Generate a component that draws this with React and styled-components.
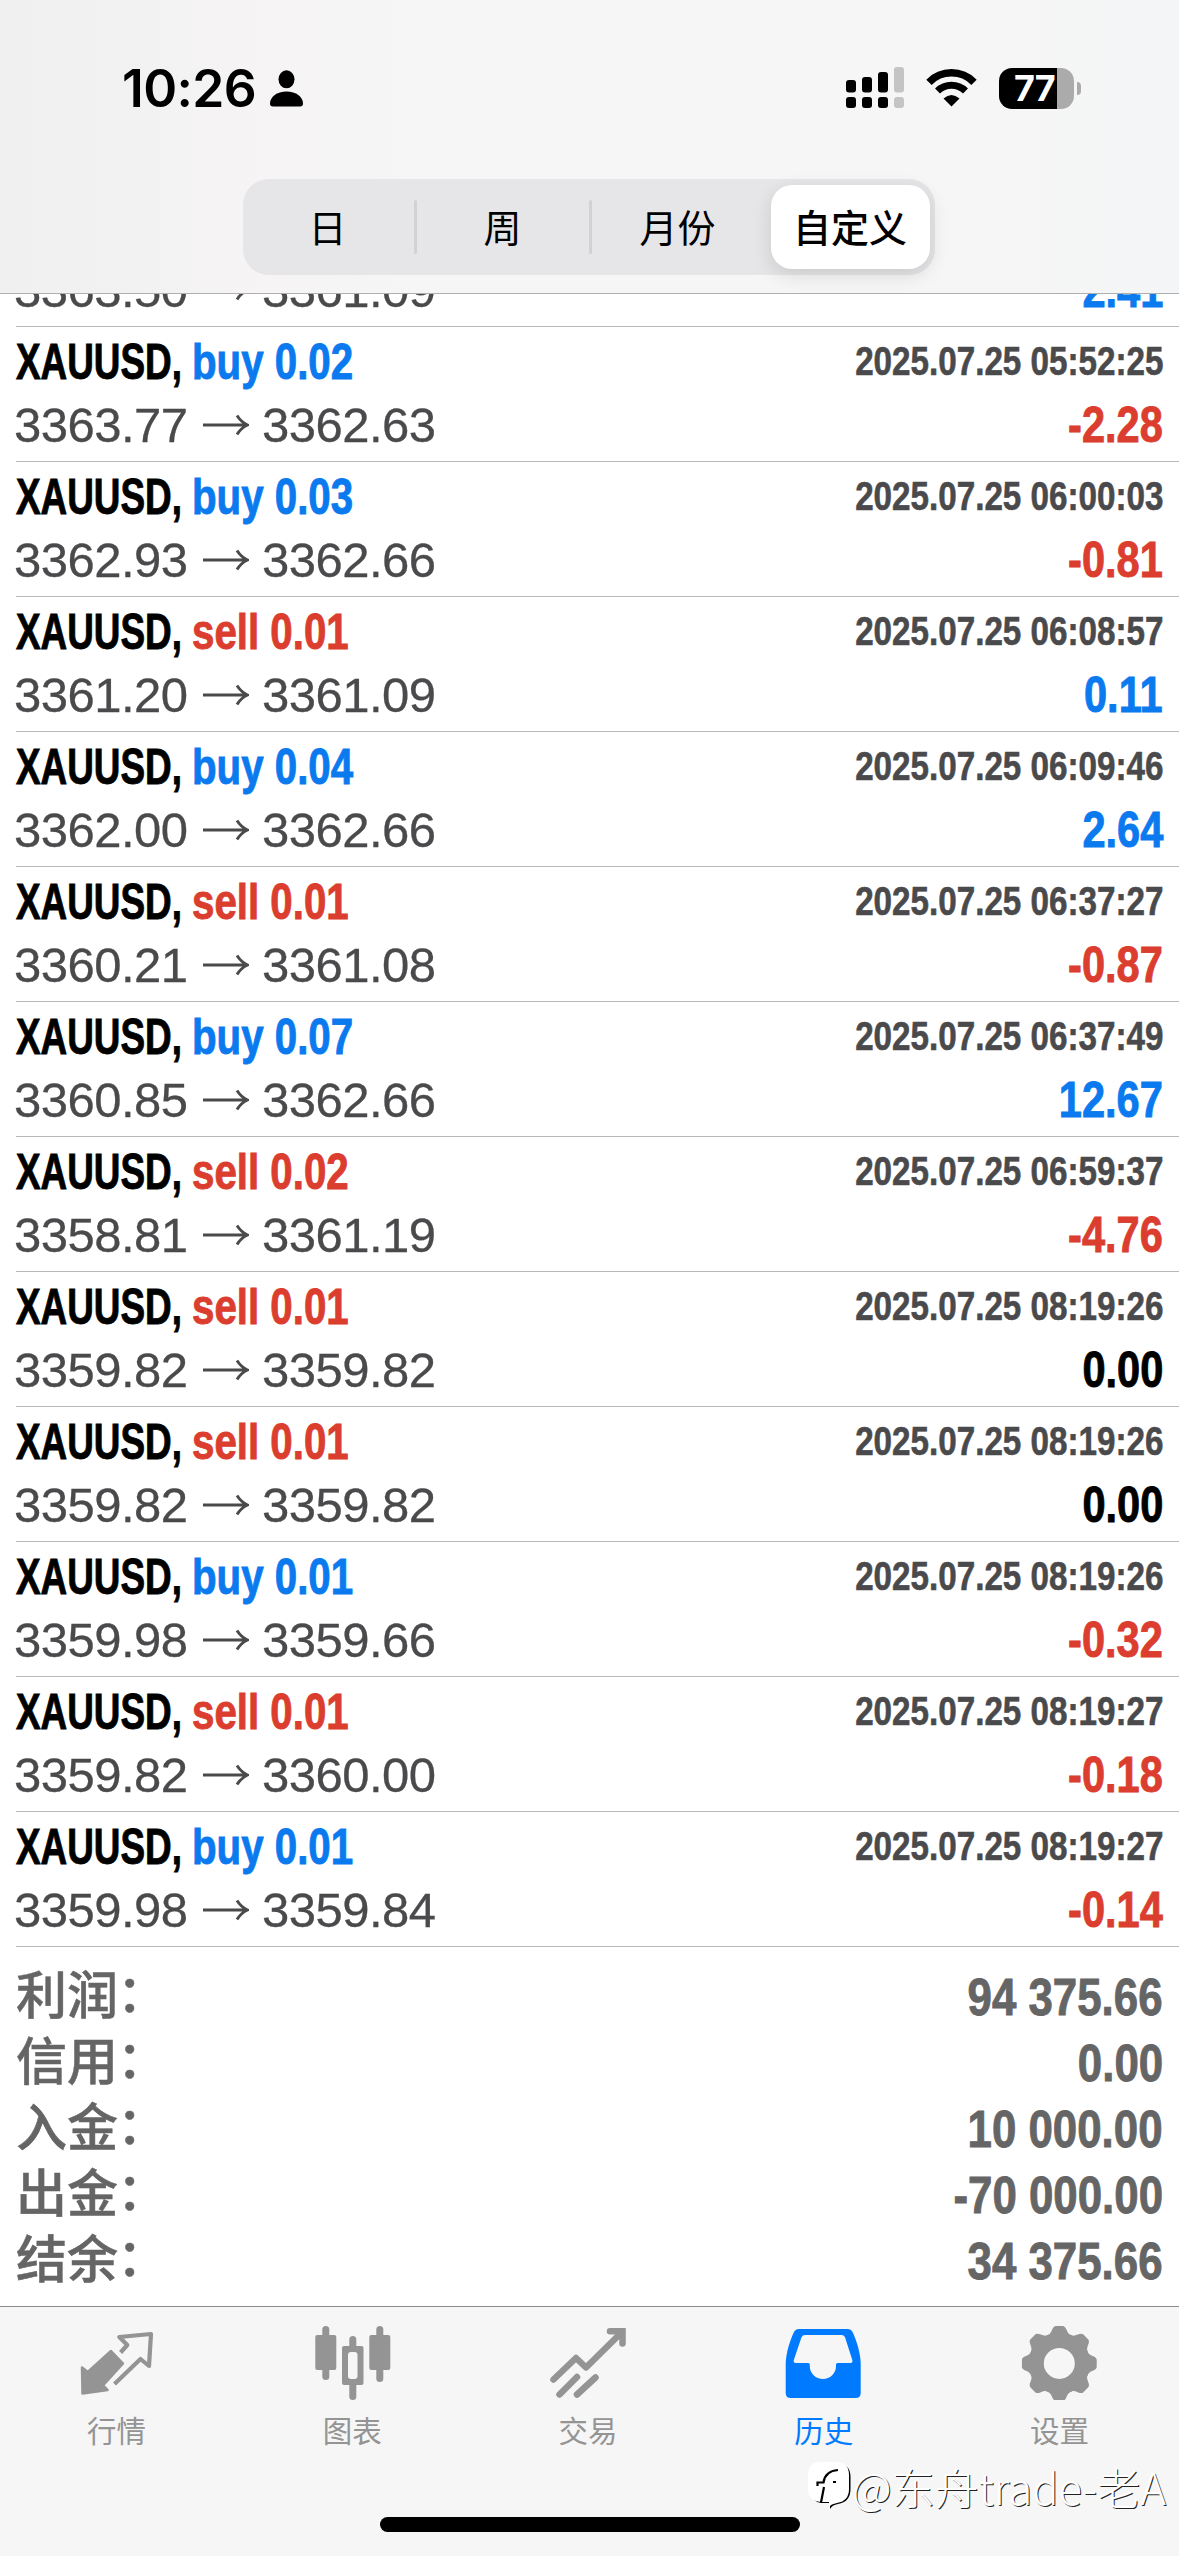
import React, { useState } from "react";
import styled, { createGlobalStyle } from "styled-components";

const trades = [
  { side: "buy", lot: "0.02", time: "2025.07.25 05:52:25", open: "3363.77", close: "3362.63", profit: "-2.28" },
  { side: "buy", lot: "0.03", time: "2025.07.25 06:00:03", open: "3362.93", close: "3362.66", profit: "-0.81" },
  { side: "sell", lot: "0.01", time: "2025.07.25 06:08:57", open: "3361.20", close: "3361.09", profit: "0.11" },
  { side: "buy", lot: "0.04", time: "2025.07.25 06:09:46", open: "3362.00", close: "3362.66", profit: "2.64" },
  { side: "sell", lot: "0.01", time: "2025.07.25 06:37:27", open: "3360.21", close: "3361.08", profit: "-0.87" },
  { side: "buy", lot: "0.07", time: "2025.07.25 06:37:49", open: "3360.85", close: "3362.66", profit: "12.67" },
  { side: "sell", lot: "0.02", time: "2025.07.25 06:59:37", open: "3358.81", close: "3361.19", profit: "-4.76" },
  { side: "sell", lot: "0.01", time: "2025.07.25 08:19:26", open: "3359.82", close: "3359.82", profit: "0.00" },
  { side: "sell", lot: "0.01", time: "2025.07.25 08:19:26", open: "3359.82", close: "3359.82", profit: "0.00" },
  { side: "buy", lot: "0.01", time: "2025.07.25 08:19:26", open: "3359.98", close: "3359.66", profit: "-0.32" },
  { side: "sell", lot: "0.01", time: "2025.07.25 08:19:27", open: "3359.82", close: "3360.00", profit: "-0.18" },
  { side: "buy", lot: "0.01", time: "2025.07.25 08:19:27", open: "3359.98", close: "3359.84", profit: "-0.14" },
];

const totals = [
  ["利润", "94 375.66"],
  ["信用", "0.00"],
  ["入金", "10 000.00"],
  ["出金", "-70 000.00"],
  ["结余", "34 375.66"],
];

const profitColor = (profit) => {
  const value = Number(profit);
  if (value === 0) return "#000";
  return value > 0 ? "#0a7aee" : "#db3d2e";
};

const QuotesIcon = () => (
  <Icon viewBox="0 0 90 90">
    <path
      d="M9 57.500L14.800 62L38 41L50 53.500L30 75.500L34.500 80L9.500 83.500Z"
      fill="currentColor"
      stroke="currentColor"
      strokeWidth="2.500"
      strokeLinejoin="round"
    />
    <path
      d="M47.600 42.500L54.300 35L46.300 27L78 24L76 56L67.500 49L41.500 74"
      fill="none"
      stroke="currentColor"
      strokeWidth="4.200"
      strokeLinejoin="round"
    />
  </Icon>
);

const ChartIcon = () => (
  <Icon viewBox="0 0 90 90" fill="currentColor">
    <rect x="13.300" y="16" width="7" height="54" rx="3.500" />
    <rect x="6.300" y="25" width="21" height="35" rx="2" />
    <rect x="67.300" y="16" width="7" height="56" rx="3.500" />
    <rect x="60.300" y="25" width="21" height="35" rx="2" />
    <rect x="40.300" y="26" width="7" height="64" rx="3.500" />
    <rect x="33" y="36" width="21.500" height="39" rx="2" />
    <rect x="39" y="42" width="9.500" height="27" rx="3" fill="#f6f6f6" />
  </Icon>
);

const TradeIcon = () => (
  <Icon
    viewBox="0 0 90 90"
    fill="none"
    stroke="currentColor"
    strokeWidth="6.500"
    strokeLinecap="round"
  >
    <path d="M9.500 69.500L32 48L42 57.500L78 22" strokeLinejoin="round" />
    <path d="M66 21.300H78.500V33.500" strokeLinejoin="miter" />
    <path d="M15.500 84.500L33 67M33 84.500L51.500 67.500" />
  </Icon>
);

const HistoryIcon = () => (
  <Icon viewBox="0 0 90 90">
    <path
      d="M5.700 54C5.700 44 10 30 14 22Q15.500 19 19 19H67.500Q71 19 72.500 22C76.500 30 80.700 44 80.700 54V83Q80.700 88 75.700 88H10.700Q5.700 88 5.700 83Z"
      fill="currentColor"
    />
    <path
      d="M25 25H61.500Q64 25 65 27.300L72.300 50Q73 53 70.500 53H57.500Q56 53 56 54.500V56A13.100 13.100 0 0 1 29.800 56V54.500Q29.800 53 28.300 53H16Q13 53 13.800 50L21.500 27.300Q22.500 25 25 25Z"
      fill="#f6f6f6"
    />
  </Icon>
);

const SettingsIcon = () => (
  <Icon viewBox="0 0 90 90" fill="currentColor">
    <circle cx="43.300" cy="53.400" r="23" fill="none" stroke="currentColor" strokeWidth="15" />
    {[0, 45, 90, 135, 180, 225, 270, 315].map((angle) => (
      <path
        key={angle}
        d="M30.500 25.500Q34 25 36 20Q37.500 16 40 16H46.600Q49 16 50.600 20Q52.600 25 56.100 25.500V32H30.500Z"
        transform={`rotate(${angle} 43.300 53.400)`}
      />
    ))}
  </Icon>
);

const tabs = [
  { name: "行情", icon: QuotesIcon },
  { name: "图表", icon: ChartIcon },
  { name: "交易", icon: TradeIcon },
  { name: "历史", icon: HistoryIcon },
  { name: "设置", icon: SettingsIcon },
];

function StatusBar() {
  return (
    <Status>
      <Clock>10:26</Clock>
      <svg width="33" height="37" viewBox="0 0 33 37">
        <ellipse cx="16.500" cy="9.300" rx="8" ry="9" />
        <path d="M3 36.500Q0 36.500 0 33.500C0 27 7 21.500 16.500 21.500S33 27 33 33.500Q33 36.500 30 36.500Z" />
      </svg>
      <StatusIcons>
        <svg width="58" height="42" viewBox="0 0 58 42">
          <rect x="0" y="13" width="10" height="12.500" rx="3" />
          <rect x="16" y="10" width="10" height="15.500" rx="3" />
          <rect x="32" y="5" width="10" height="20.500" rx="3" />
          <rect x="48" y="0" width="10" height="25.500" rx="3" fill="#c4c4c4" />
          <rect x="0" y="30" width="10" height="11" rx="3" />
          <rect x="16" y="30" width="10" height="11" rx="3" />
          <rect x="32" y="30" width="10" height="11" rx="3" />
          <rect x="48" y="30" width="10" height="11" rx="3" fill="#c4c4c4" />
        </svg>
        <svg width="51" height="38" viewBox="0 0 51 38">
          <path d="M3 13.300A31.500 31.500 0 0 1 48 13.300" fill="none" stroke="#000" strokeWidth="7.500" />
          <path d="M11.500 22A20 20 0 0 1 39.500 22" fill="none" stroke="#000" strokeWidth="7" />
          <path d="M25.500 37.500L17.500 29.500Q25.500 22.500 33.500 29.500Z" />
        </svg>
        <Battery>
          <BatteryBody>
            <span>77</span>
          </BatteryBody>
          <BatteryTip />
        </Battery>
      </StatusIcons>
    </Status>
  );
}

function Prices({ open, close, profit }) {
  return (
    <PriceLine>
      <Price>{open}</Price>
      <svg width="46" height="22" viewBox="0 0 46 22">
        <path
          d="M0 11H44M34 1.500Q38 8 44.500 11Q38 14 34 20.500"
          fill="none"
          stroke="#4a4a4c"
          strokeWidth="2.900"
        />
      </svg>
      <Price>{close}</Price>
      <Profit $color={profitColor(profit)}>{profit}</Profit>
    </PriceLine>
  );
}

function Trade({ trade }) {
  return (
    <Row>
      <Line>
        <Symbol>XAUUSD,</Symbol>
        <Side $side={trade.side}>
          {trade.side} {trade.lot}
        </Side>
        <Time>{trade.time}</Time>
      </Line>
      <Prices open={trade.open} close={trade.close} profit={trade.profit} />
    </Row>
  );
}

function App() {
  const [period, setPeriod] = useState("自定义");
  const [activeTab, setActiveTab] = useState("历史");

  return (
    <Page>
      <GlobalStyle />
      <Header>
        <StatusBar />
        <Segments>
          {["日", "周", "月份", "自定义"].map((name) => (
            <Segment key={name} $active={period === name} onClick={() => setPeriod(name)}>
              {name}
            </Segment>
          ))}
        </Segments>
      </Header>
      <List>
        <Trades>
          {/* scrolled halfway under the header */}
          <Row>
            <Prices open="3363.50" close="3361.09" profit="2.41" />
          </Row>
          {trades.map((trade, i) => (
            <Trade key={i} trade={trade} />
          ))}
        </Trades>
        <Summary>
          {totals.map(([label, value]) => (
            <SummaryRow key={label}>
              <SummaryLabel>
                {label}
                <Colon>：</Colon>
              </SummaryLabel>
              <SummaryValue>{value}</SummaryValue>
            </SummaryRow>
          ))}
        </Summary>
      </List>
      <TabBar>
        {tabs.map(({ name, icon: TabIcon }) => (
          <Tab key={name} $active={activeTab === name} onClick={() => setActiveTab(name)}>
            <TabIcon />
            <TabLabel>{name}</TabLabel>
          </Tab>
        ))}
      </TabBar>
      <HomeIndicator />
      <Watermark>
        <svg width="44" height="50" viewBox="0 0 44 50">
          <path
            d="M15 2H30Q42.500 2 42.500 15V27Q42.500 40 30 42Q24 43 22 47V41H13Q3 39 2 29Z"
            fill="#000"
          />
          <path
            d="M13 0H28Q41 0 41 13V27Q41 39 29 41Q23 42 21 45V40H13Q0 39 0 27V13Q0 0 13 0Z"
            fill="#fff"
          />
          <path
            d="M9.500 24V20.500H15.500Q17 9 30 8M16 25L13 40.500M25 20H28"
            fill="none"
            stroke="#000"
            strokeWidth="2.200"
          />
        </svg>
        <span>@东舟trade-老A</span>
      </Watermark>
    </Page>
  );
}

const GlobalStyle = createGlobalStyle`
  * {
    box-sizing: border-box;
  }
  body {
    margin: 0;
    background: #fff;
  }
`;

const Page = styled.div`
  position: relative;
  display: flex;
  flex-direction: column;
  width: 1179px;
  height: 2556px;
  overflow: hidden;
  background: #fff;
  color: #000;
  font-family: "Liberation Sans", "Noto Sans CJK SC", sans-serif;
`;

const Header = styled.header`
  flex: none;
  height: 294px;
  border-bottom: 1px solid #b0b0b0;
  background: linear-gradient(90deg, #f0f0f1 0, #f3f2f2 150px, #f6f4f4 260px, #f6f6f6 420px, #f6f6f6 980px, #f4f5f6 100%);
`;

const Status = styled.div`
  display: flex;
  align-items: center;
  height: 179px;
  padding: 0 98px 3px 122px;
`;

const Clock = styled.div`
  width: 148px;
  font-family: Inter, sans-serif;
  font-size: 51.500px;
  font-weight: 600;
  letter-spacing: -0.6px;
`;

const StatusIcons = styled.div`
  display: flex;
  align-items: center;
  gap: 22px;
  margin-left: auto;
`;

const Battery = styled.div`
  display: flex;
  align-items: center;
  gap: 3px;
`;

const BatteryBody = styled.div`
  width: 75px;
  height: 41px;
  padding-left: 15px;
  border-radius: 13px;
  background: linear-gradient(90deg, #000 58px, #ababab 58px);
  color: #fff;
  font-family: Inter, sans-serif;
  font-size: 36px;
  font-weight: 700;
  line-height: 41px;
  letter-spacing: -1px;
`;

const BatteryTip = styled.div`
  width: 4px;
  height: 13px;
  border-radius: 0 4px 4px 0;
  background: #ababab;
`;

const Segments = styled.div`
  display: flex;
  width: 692px;
  height: 96px;
  margin-left: 243px;
  padding: 6px 5px 6px 0;
  border-radius: 26px;
  background: #e6e5e7;
`;

const Segment = styled.button`
  position: relative;
  flex: none;
  width: ${(props) => (props.$active ? "159px" : "175px")};
  height: 84px;
  margin-left: ${(props) => (props.$active ? "auto" : "0")};
  padding: 0 ${(props) => (props.$active ? "1px" : "6px")} 2px 0;
  border: none;
  border-radius: 21px;
  background: ${(props) => (props.$active ? "#fff" : "transparent")};
  box-shadow: ${(props) => (props.$active ? "0 6px 20px rgba(0, 0, 0, 0.12)" : "none")};
  color: #000;
  font-family: "Noto Sans CJK SC", sans-serif;
  font-size: 38px;
  font-weight: ${(props) => (props.$active ? 500 : 400)};
  line-height: 78px;

  /* divider between idle segments */
  &:nth-child(-n + 2)::after {
    content: "";
    position: absolute;
    top: 15px;
    right: 1px;
    width: 3px;
    height: 54px;
    border-radius: 2px;
    background: #d2d1d3;
  }
`;

const List = styled.main`
  flex: none;
  height: 2012px;
  overflow: hidden;
`;

const Trades = styled.div`
  margin: -34px 0 0 16px;
`;

const Row = styled.div`
  padding-bottom: 7px;
  border-bottom: 1px solid #b8b8ba;
`;

const Line = styled.div`
  display: flex;
  height: 68px;
  padding-right: 16px;
  line-height: 70px;
  white-space: nowrap;
`;

/* the narrow face is made by squeezing the bold one */
const Condensed = styled.span`
  display: inline-block;
  font-weight: 700;
  font-size: 49.500px;
  white-space: nowrap;
  transform: scaleX(0.83);
  transform-origin: left;
  -webkit-text-stroke: 0.9px currentColor;
`;

const Symbol = styled(Condensed)`
  width: 175.500px;
  transform: scaleX(0.745);
`;

const Side = styled(Condensed)`
  color: ${(props) => (props.$side === "buy" ? "#0a7aee" : "#db3d2e")};
  transform: scaleX(0.813);
`;

const Time = styled(Condensed)`
  margin-left: auto;
  color: #4a4a4c;
  font-size: 40px;
  line-height: 68px;
  transform-origin: right;
  -webkit-text-stroke-width: 0.6px;
`;

const PriceLine = styled(Line)`
  align-items: center;
  height: 59px;
  line-height: 58px;

  svg {
    margin: 0 15px 0 16px;
  }
`;

const Price = styled.span`
  width: 173px;
  margin-left: -2px;
  color: #4a4a4c;
  font-size: 49px;
  letter-spacing: -0.5px;
  -webkit-text-stroke: 0.3px currentColor;
`;

const Profit = styled(Condensed)`
  margin-left: auto;
  color: ${(props) => props.$color};
  transform: scaleX(0.84);
  transform-origin: right;
`;

const Summary = styled.div`
  padding: 17px 16px 0 16px;
`;

const SummaryRow = styled.div`
  display: flex;
  justify-content: space-between;
  height: 66px;
  color: #656565;
  line-height: 66px;
`;

const SummaryLabel = styled.span`
  font-size: 51px;
  font-weight: 500;
  -webkit-text-stroke: 0.5px currentColor;
`;

const Colon = styled.span`
  position: relative;
  top: -2px;
  left: -1px;
`;

const SummaryValue = styled(Condensed)`
  font-size: 52.500px;
  line-height: 65px;
  transform: scaleX(0.835);
  transform-origin: right;
`;

const TabBar = styled.nav`
  display: flex;
  flex: none;
  height: 250px;
  padding-top: 3px;
  border-top: 1px solid #8c8c8c;
  background: #f6f6f6;
`;

const Tab = styled.button`
  display: flex;
  flex: 1;
  flex-direction: column;
  align-items: center;
  height: 150px;
  padding: 0;
  border: none;
  background: none;
  color: ${(props) => (props.$active ? "#007aff" : "#949494")};
`;

const TabLabel = styled.span`
  padding-right: 3px;
  font-family: "Noto Sans CJK SC", sans-serif;
  font-size: 29.500px;
  line-height: 59px;
`;

const Icon = styled.svg`
  flex: none;
  width: 90px;
  height: 90px;
`;

const HomeIndicator = styled.div`
  position: absolute;
  bottom: 24px;
  left: 380px;
  width: 420px;
  height: 15px;
  border-radius: 8px;
  background: #000;
`;

const Watermark = styled.div`
  position: absolute;
  right: 13px;
  bottom: 39px;
  display: flex;
  align-items: center;
  gap: 0;
  color: #fff;
  font-family: "Noto Sans CJK SC", sans-serif;
  font-size: 43.500px;
  font-weight: 300;
  line-height: 60px;
  white-space: nowrap;
  text-shadow: 1px 1px 0 #222;
`;

export default App;
